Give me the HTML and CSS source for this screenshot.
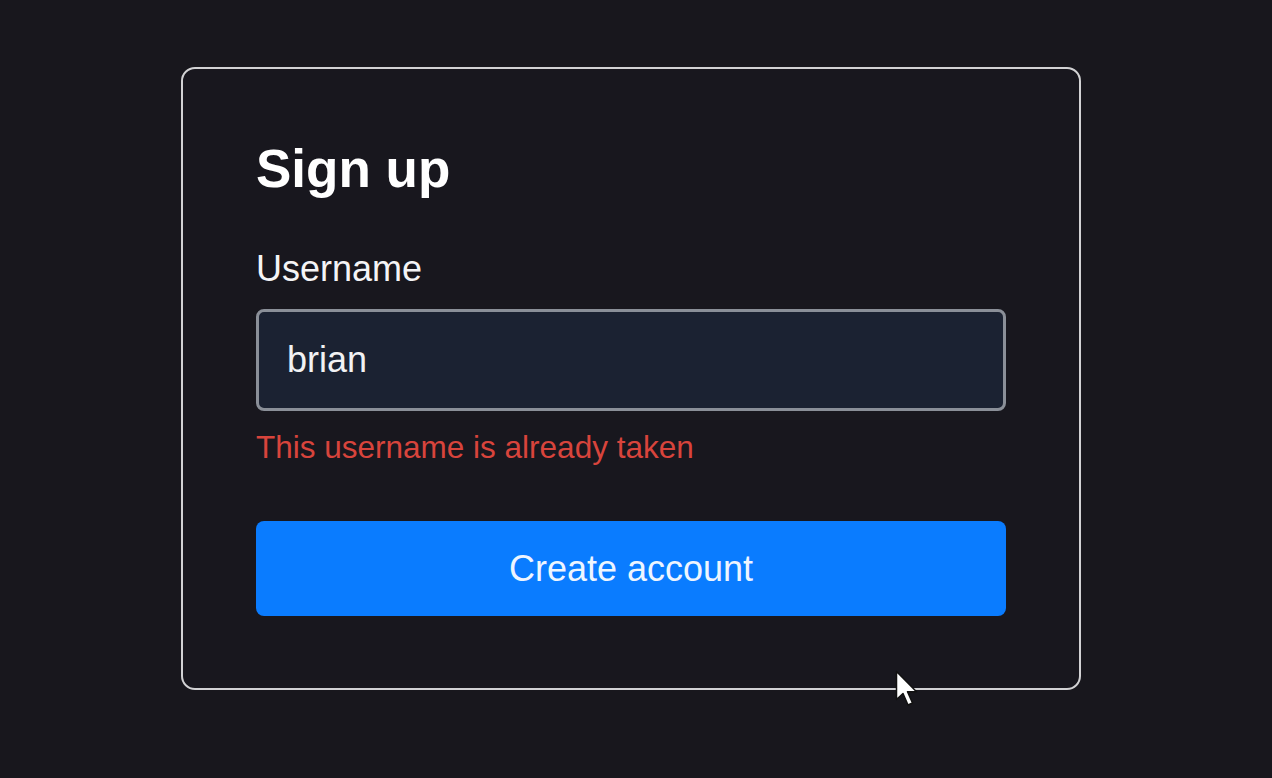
FILE: index.html
```html
<!DOCTYPE html>
<html lang="en">
<head>
  <meta charset="UTF-8">
  <meta name="viewport" content="width=device-width, initial-scale=1.0">
  <title>Sign up</title>
  <link rel="stylesheet" href="styles.css">
</head>
<body>
  <form class="card" onsubmit="return false">
    <h1 class="title">Sign up</h1>
    <label class="label" for="username">Username</label>
    <input class="field" id="username" name="username" type="text" value="brian" autocomplete="off">
    <p class="error">This username is already taken</p>
    <button class="btn" type="submit">Create account</button>
  </form>

  <svg class="cursor" width="26" height="40" viewBox="0 0 26 40">
    <path d="M1.5 1.5 L1.5 29.5 L8 23.5 L13 35 L17.5 33 L12.5 21.8 L21.5 21.8 Z" fill="#fff" stroke="#111" stroke-width="1.5" stroke-linejoin="round"/>
  </svg>
</body>
</html>
```

FILE: styles.css
```css
html, body { height: 100%; }
body {
  margin: 0;
  background-color: #18171d;
  color: #ffffff;
  font-family: "Liberation Sans", Arial, sans-serif;
  overflow: hidden;
  position: relative;
}

.card {
  display: flex;
  flex-direction: column;
  width: 900px;
  box-sizing: border-box;
  margin: 67px 0 0 181px;
  padding: 73px 73px 72px 73px;
  border: 2px solid #d2d2d4;
  border-radius: 14px;
  background-color: #18171e;
}

.title {
  margin: 0;
  font-size: 53px;
  line-height: 53px;
  font-weight: 700;
}

.label {
  margin-top: 56px;
  font-size: 36px;
  line-height: 36px;
  color: #f4f4f6;
}

.field {
  margin-top: 22px;
  height: 102px;
  box-sizing: border-box;
  padding: 0 28px;
  border: 3px solid #8a8f98;
  border-radius: 8px;
  background-color: #1b2232;
  color: #f2f2f4;
  font-family: inherit;
  font-size: 36px;
  outline: none;
}

.error {
  margin: 21px 0 0 0;
  font-size: 31.5px;
  line-height: 31px;
  color: #d8443c;
}

.btn {
  margin-top: 58px;
  height: 95px;
  border: 0;
  border-radius: 8px;
  background-color: #0a7cff;
  color: #eef5ff;
  font-family: inherit;
  font-size: 36px;
  cursor: pointer;
}

.cursor {
  position: absolute;
  left: 895px;
  top: 670px;
}
```
